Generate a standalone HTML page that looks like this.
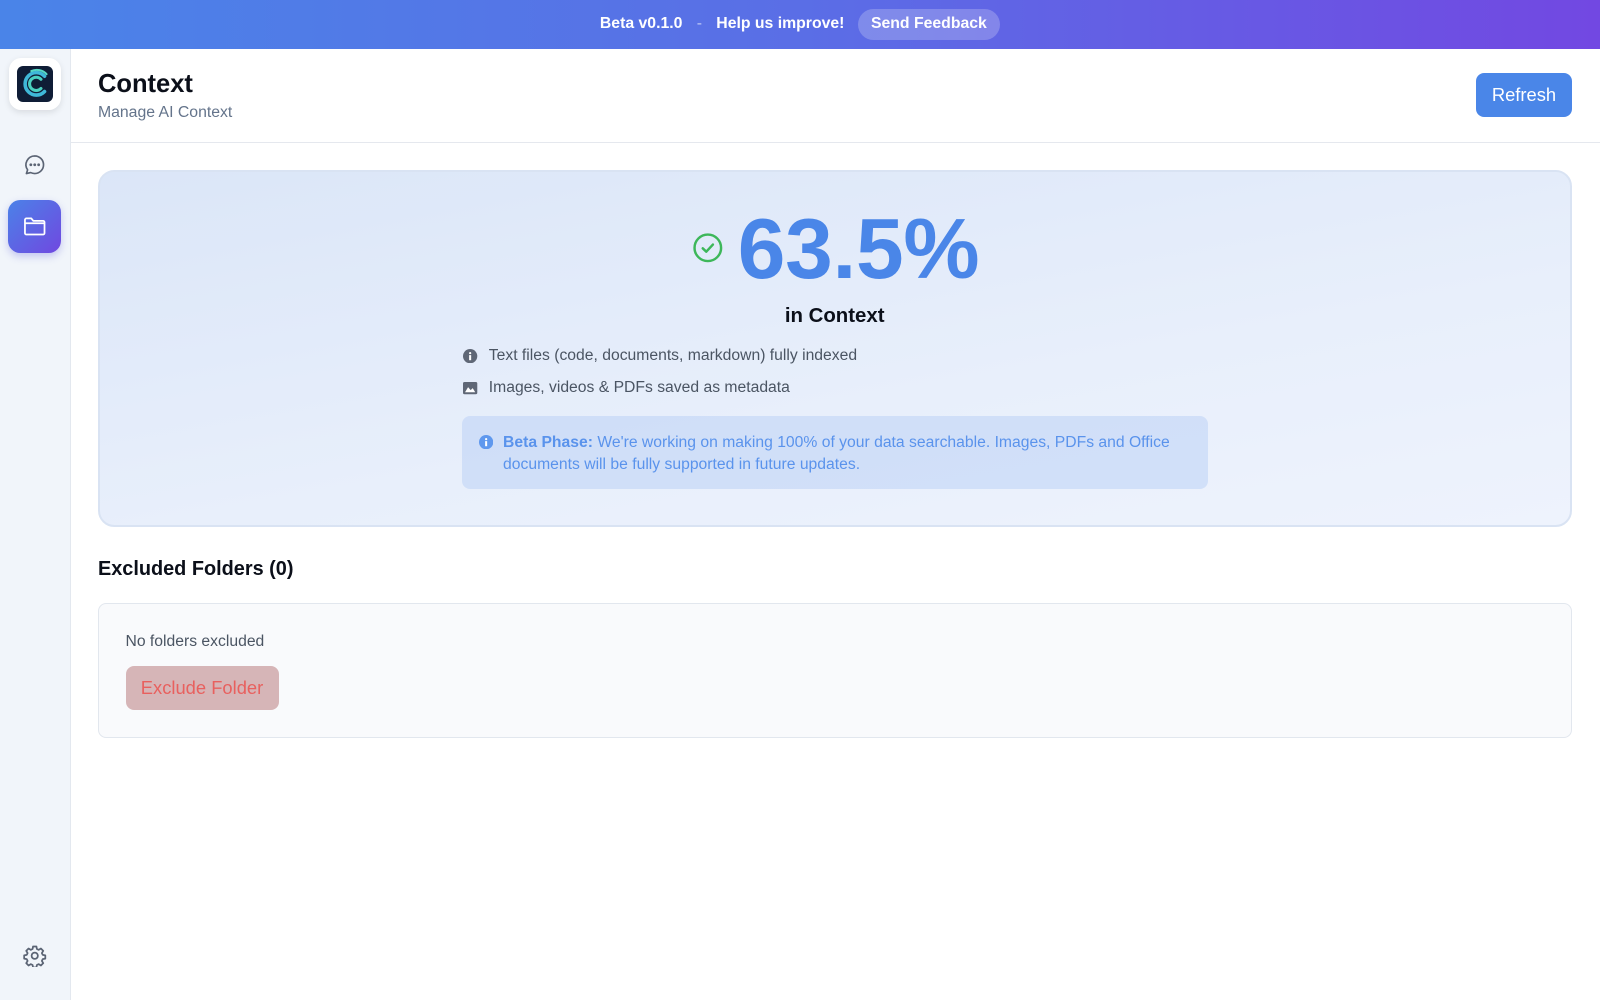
<!DOCTYPE html>
<html><head><meta charset="utf-8"><style>
*{box-sizing:border-box;margin:0;padding:0}
html,body{width:1600px;height:1000px;overflow:hidden;background:#fff;font-family:"Liberation Sans",sans-serif}
#w{zoom:1.020408;width:1568px;height:980px;position:relative}
.a{position:absolute}
</style></head><body><div id="w">
<div class="a" style="left:0;top:0;width:1568px;height:48px;background:linear-gradient(90deg,#4a84e8,#5a6ee6 50%,#7248e2);"></div>
<div class="a" style="left:0;top:14px;width:1568px;text-align:center;color:#fff;font-size:15.5px;font-weight:bold;line-height:20px">
<span>Beta v0.1.0</span><span style="margin:0 14px;color:rgba(255,255,255,.6);font-weight:normal">-</span><span>Help us improve!</span><span style="display:inline-block;margin-left:13px;padding:5px 13px;margin-top:-5px;border-radius:16px;background:rgba(255,255,255,.22);vertical-align:top">Send Feedback</span></div>
<div class="a" style="left:0;top:48px;width:70px;height:932px;background:#f1f5fa;border-right:1px solid #e3e8ef"></div>
<div class="a" style="left:9px;top:57px;width:51px;height:51px;background:#fff;border-radius:12px;box-shadow:0 2px 6px rgba(0,0,0,.1)"></div>
<div class="a" style="left:17px;top:65px;width:35px;height:35px;background:#0f1d36;border-radius:6px"></div>
<svg class="a" style="left:17px;top:65px" width="35" height="35" viewBox="0 0 35 35" fill="none" stroke-linecap="round">
<path d="M27 10 A11 11 0 1 0 27 25" stroke="#3fb8d8" stroke-width="3.5"/>
<path d="M23.5 13 A6.5 6.5 0 1 0 23.5 22" stroke="#4ad0c0" stroke-width="3"/>
<path d="M29 8 A13 13 0 0 0 14 5" stroke="#56d8c4" stroke-width="2"/></svg>
<svg class="a" style="left:23px;top:150px" width="23" height="23" viewBox="0 0 24 24" fill="none" stroke="#5b6474" stroke-width="1.7"><path d="M12 3a9 9 0 0 1 0 18c-1.5 0-3-.4-4.2-1L3.5 21l1.2-3.8A9 9 0 0 1 12 3z" stroke-linejoin="round"/><circle cx="8" cy="12" r=".6" fill="#5b6474"/><circle cx="12" cy="12" r=".6" fill="#5b6474"/><circle cx="16" cy="12" r=".6" fill="#5b6474"/></svg>
<div class="a" style="left:8px;top:196px;width:52px;height:52px;border-radius:12px;background:linear-gradient(135deg,#4b82e8,#7048e0);box-shadow:0 3px 8px rgba(90,90,220,.3)"></div>
<svg class="a" style="left:23px;top:211px" width="23" height="22" viewBox="0 0 24 22" fill="none" stroke="#fff" stroke-width="1.8" stroke-linejoin="round"><path d="M2 4.5a1.5 1.5 0 0 1 1.5-1.5h5l2 2.5h10a1.5 1.5 0 0 1 1.5 1.5v11a1.5 1.5 0 0 1-1.5 1.5h-17A1.5 1.5 0 0 1 2 18z"/><path d="M2 8h20"/></svg>
<svg class="a" style="left:23px;top:925px" width="23" height="23" viewBox="0 0 24 24" fill="none" stroke="#5b6474" stroke-width="1.8" stroke-linejoin="round"><path d="M10.3 2.5h3.4l.5 2.6 1.8.9 2.3-1.4 2.4 2.4-1.4 2.3.9 1.8 2.6.5v3.4l-2.6.5-.9 1.8 1.4 2.3-2.4 2.4-2.3-1.4-1.8.9-.5 2.6h-3.4l-.5-2.6-1.8-.9-2.3 1.4-2.4-2.4 1.4-2.3-.9-1.8-2.6-.5v-3.4l2.6-.5.9-1.8-1.4-2.3 2.4-2.4 2.3 1.4 1.8-.9z"/><circle cx="12" cy="12" r="3.2"/></svg>
<div class="a" style="left:70px;top:139px;width:1498px;height:1px;background:#e5e8ee"></div>
<div class="a" style="left:96px;top:69px;font-size:25px;font-weight:bold;color:#0b0f19">Context</div>
<div class="a" style="left:96px;top:102px;font-size:15.5px;color:#64748b">Manage AI Context</div>
<div class="a" style="left:1446px;top:72px;width:95px;height:43px;border-radius:8px;background:#4a86e8;color:#fff;font-size:18px;line-height:43px;text-align:center">Refresh</div>
<div class="a" style="left:96px;top:167px;width:1445px;height:349px;border-radius:16px;border:2px solid #d9e3f3;background:linear-gradient(170deg,#dbe6f8,#e8effb 60%,#eef3fd)"></div>
<svg class="a" style="left:678px;top:227px" width="31" height="31" viewBox="0 0 31 31" fill="none" stroke="#3db75a" stroke-width="2.4" stroke-linecap="round" stroke-linejoin="round"><circle cx="15.5" cy="15.5" r="13"/><path d="M10.5 16l3.5 3.3 6.5-7"/></svg>
<div class="a" style="left:723px;top:200px;font-size:84px;font-weight:bold;color:#4a86e8;letter-spacing:-0.3px;line-height:90px">63.5%</div>
<div class="a" style="left:0;top:299px;width:1636px;text-align:center;font-size:20px;font-weight:bold;color:#0b0f19">in Context</div>
<svg class="a" style="left:454px;top:342px" width="14" height="14" viewBox="0 0 14 14"><circle cx="7" cy="7" r="7" fill="#5f6776"/><rect x="6" y="6" width="2" height="5" fill="#fff"/><circle cx="7" cy="4" r="1.1" fill="#fff"/></svg>
<div class="a" style="left:479px;top:340px;font-size:15.4px;color:#4b5563">Text files (code, documents, markdown) fully indexed</div>
<svg class="a" style="left:454px;top:373px" width="14" height="14" viewBox="0 0 14 14"><rect x="0" y="1" width="14" height="12" rx="1.5" fill="#5f6776"/><path d="M2 11l3-5 2.5 3 2-2 2.5 4z" fill="#fff"/></svg>
<div class="a" style="left:479px;top:371px;font-size:15.4px;color:#4b5563">Images, videos &amp; PDFs saved as metadata</div>
<div class="a" style="left:453px;top:408px;width:731px;height:71px;border-radius:8px;background:rgba(188,210,246,.55)"></div>
<svg class="a" style="left:469px;top:426px" width="14" height="14" viewBox="0 0 14 14"><circle cx="7" cy="7" r="7" fill="#5f98ee"/><rect x="6" y="6" width="2" height="5" fill="#fff"/><circle cx="7" cy="4" r="1.1" fill="#fff"/></svg>
<div class="a" style="left:493px;top:423px;width:690px;font-size:15.4px;line-height:22px;color:#5a93ec"><b>Beta Phase:</b> We're working on making 100% of your data searchable. Images, PDFs and Office documents will be fully supported in future updates.</div>
<div class="a" style="left:96px;top:547px;font-size:19.5px;font-weight:bold;color:#0b0f19">Excluded Folders (0)</div>
<div class="a" style="left:96px;top:591px;width:1445px;height:132px;border-radius:8px;border:1px solid #e2e7ee;background:#f9fafc"></div>
<div class="a" style="left:123px;top:620px;font-size:15.4px;color:#4b5563">No folders excluded</div>
<div class="a" style="left:123px;top:653px;width:150px;height:43px;border-radius:8px;background:#d6b5b7;color:#e8605e;font-size:18px;line-height:43px;text-align:center">Exclude Folder</div>
</div></body></html>
